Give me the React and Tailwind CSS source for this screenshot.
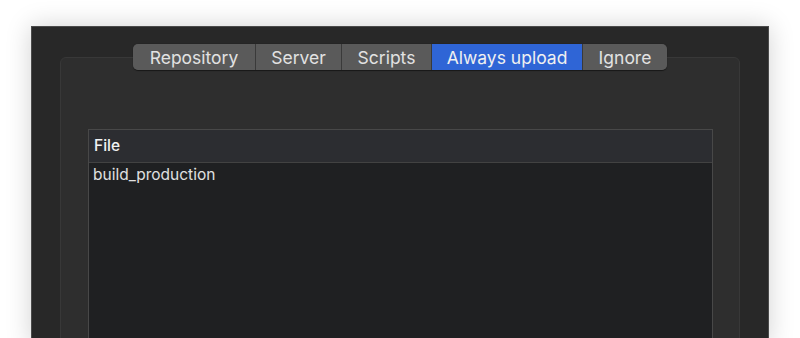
export default function App() {
  const tabs = [
    { label: "Repository", w: "w-[122px]" },
    { label: "Server", w: "w-[85px]" },
    { label: "Scripts", w: "w-[89px]" },
    { label: "Always upload", w: "w-[150px]", active: true },
    { label: "Ignore", w: "w-[84px]" },
  ];
  return (
    <div className="w-[800px] h-[338px] bg-white overflow-hidden pt-[26px] pl-[31px]" style={{ fontFamily: "Inter, 'Helvetica Neue', Arial, sans-serif" }}>
      <div className="w-[738px] h-[320px] bg-[#282828] border-t border-l border-r border-[#4b4b4b] shadow-[0_0_24px_rgba(0,0,0,0.18)] pt-[30px] pl-[28px] pr-[28px]">
        <div className="relative h-[300px] rounded-[6px] border border-[#383838] bg-[#2e2e2e] pt-[71px] pl-[27px] pr-[26px]">
          <div className="absolute -top-[14px] left-1/2 -translate-x-1/2 flex h-[26px] rounded-[5px] overflow-hidden bg-[#3a3a3a] gap-px shadow-[0_0.5px_1px_rgba(0,0,0,0.5)]">
            {tabs.map((t) => (
              <div
                key={t.label}
                className={`${t.w} h-full flex items-center justify-center pt-[1px] text-[17.5px] leading-none ${t.active ? "bg-[#2f65d6] text-[#f0f0f0]" : "bg-[#5a5a5a] text-[#e2e2e2]"}`}
              >
                {t.label}
              </div>
            ))}
          </div>
          <div className="h-[240px] border border-[#484848] bg-[#1f2022]">
            <div className="h-[33px] bg-[#2c2d31] border-b border-[#424242] flex items-center pl-[5px] text-[15.5px] font-medium text-[#f2f2f2]">
              File
            </div>
            <div className="pl-[4px] pt-[2px] text-[15.5px] text-[#e0e0e0] leading-[20px]">
              build_production
            </div>
          </div>
        </div>
      </div>
    </div>
  );
}
